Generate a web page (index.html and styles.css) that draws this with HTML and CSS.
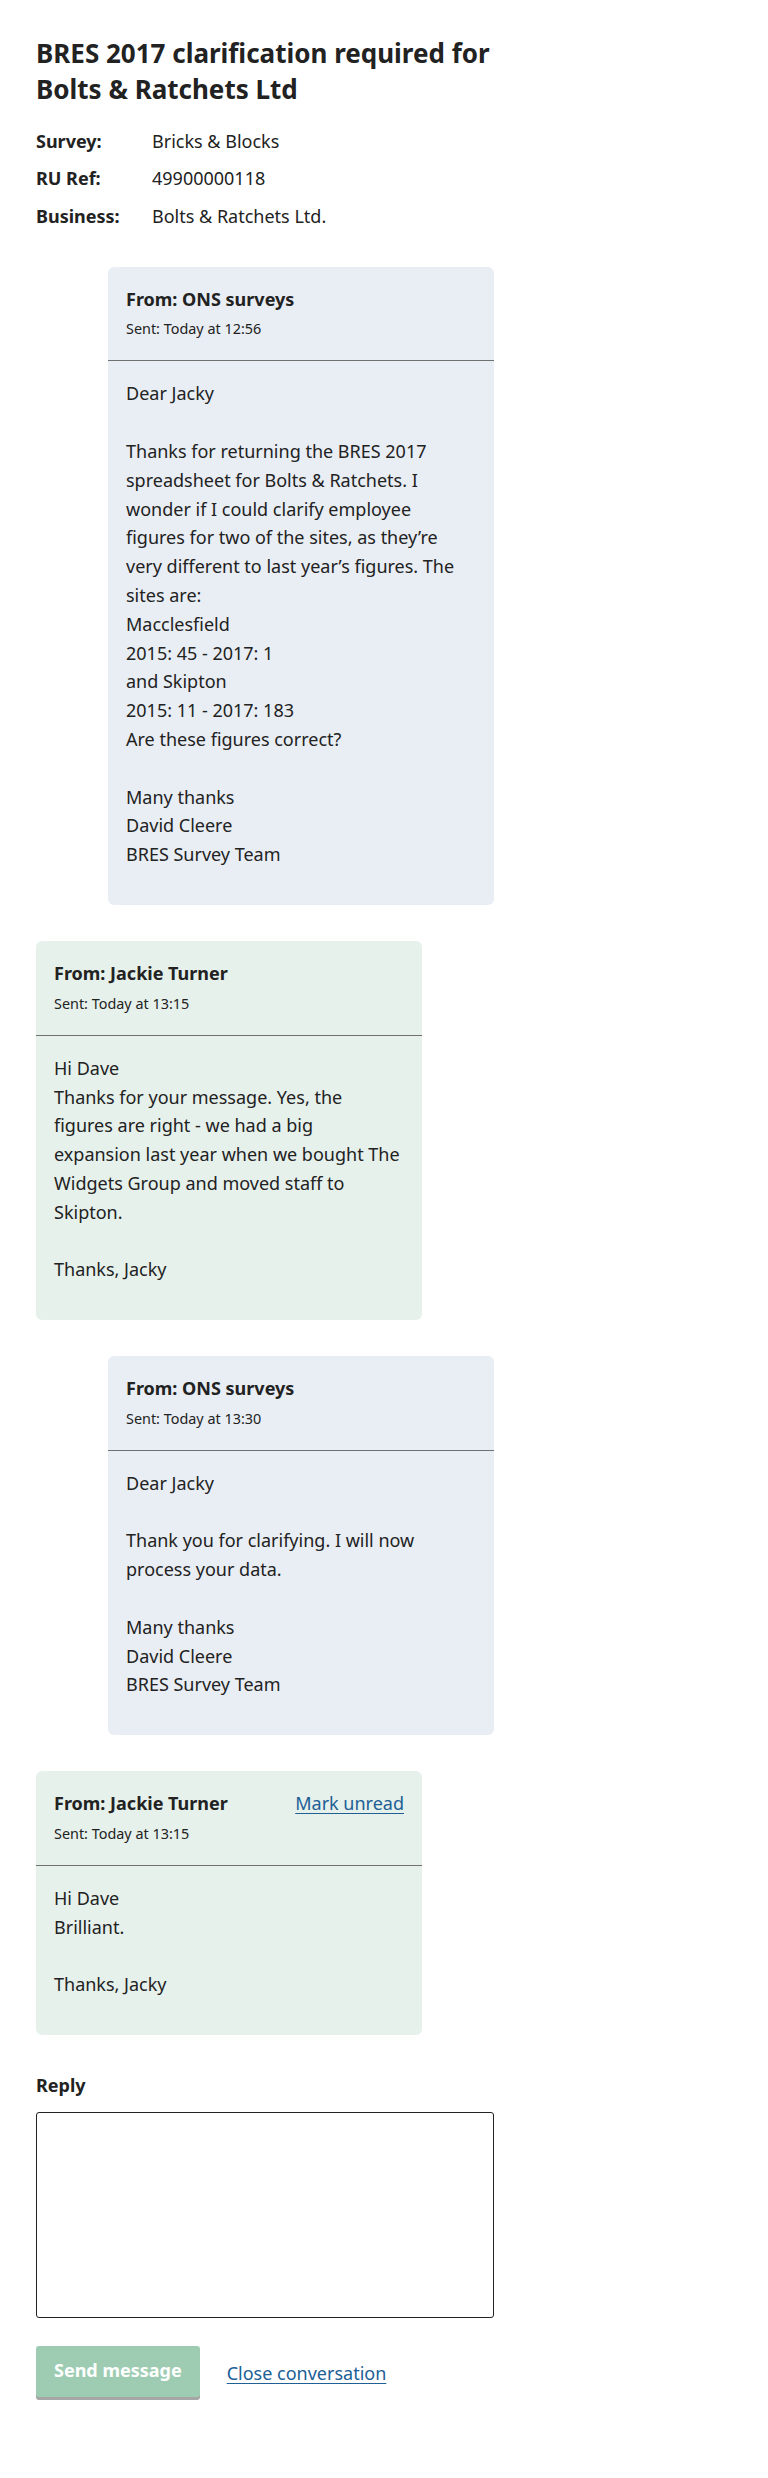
FILE: index.html
```html
<!DOCTYPE html>
<html lang="en">
<head>
<meta charset="utf-8">
<title>BRES 2017 clarification required for Bolts &amp; Ratchets Ltd</title>
<link rel="stylesheet" href="styles.css">
</head>
<body>
<main class="page">
  <h1 class="title">BRES 2017 clarification required for Bolts &amp; Ratchets Ltd</h1>
  <dl class="meta">
    <dt class="meta__term">Survey:</dt>
    <dd class="meta__value">Bricks &amp; Blocks</dd>
    <dt class="meta__term">RU Ref:</dt>
    <dd class="meta__value">49900000118</dd>
    <dt class="meta__term">Business:</dt>
    <dd class="meta__value">Bolts &amp; Ratchets Ltd.</dd>
  </dl>

  <div class="thread">
    <article class="msg msg--sent">
      <header class="msg__head">
        <div class="msg__row"><p class="msg__from">From: ONS surveys</p></div>
        <p class="msg__sent">Sent: Today at 12:56</p>
      </header>
      <div class="msg__body">
        <p>Dear Jacky<br><br>Thanks for returning the BRES 2017 spreadsheet for Bolts &amp; Ratchets. I wonder if I could clarify employee figures for two of the sites, as they’re very different to last year’s figures. The sites are:<br>Macclesfield<br>2015: 45 - 2017: 1<br>and Skipton<br>2015: 11 - 2017: 183<br>Are these figures correct?<br><br>Many thanks<br>David Cleere<br>BRES Survey Team</p>
      </div>
    </article>

    <article class="msg msg--received">
      <header class="msg__head">
        <div class="msg__row"><p class="msg__from">From: Jackie Turner</p></div>
        <p class="msg__sent">Sent: Today at 13:15</p>
      </header>
      <div class="msg__body">
        <p>Hi Dave<br>Thanks for your message. Yes, the figures are right - we had a big expansion last year when we bought The Widgets Group and moved staff to Skipton.<br><br>Thanks, Jacky</p>
      </div>
    </article>

    <article class="msg msg--sent">
      <header class="msg__head">
        <div class="msg__row"><p class="msg__from">From: ONS surveys</p></div>
        <p class="msg__sent">Sent: Today at 13:30</p>
      </header>
      <div class="msg__body">
        <p>Dear Jacky<br><br>Thank you for clarifying. I will now process your data.<br><br>Many thanks<br>David Cleere<br>BRES Survey Team</p>
      </div>
    </article>

    <article class="msg msg--received">
      <header class="msg__head">
        <div class="msg__row">
          <p class="msg__from">From: Jackie Turner</p>
          <a class="link" href="#">Mark unread</a>
        </div>
        <p class="msg__sent">Sent: Today at 13:15</p>
      </header>
      <div class="msg__body">
        <p>Hi Dave<br>Brilliant.<br><br>Thanks, Jacky</p>
      </div>
    </article>
  </div>

  <form class="reply" action="#">
    <label class="reply__label" for="reply">Reply</label>
    <textarea class="reply__input" id="reply" name="reply"></textarea>
    <div class="actions">
      <button class="btn" type="button" disabled>Send message</button>
      <a class="link" href="#">Close conversation</a>
    </div>
  </form>
</main>
</body>
</html>
```

FILE: styles.css
```css
* {
  box-sizing: border-box;
}

html, body {
  margin: 0;
  padding: 0;
  background: #ffffff;
}

body {
  font-family: "Noto Sans", "Open Sans", "Liberation Sans", sans-serif;
  font-size: 18px;
  line-height: 1.6;
  color: #222222;
}

.page {
  width: 458px;
  margin-left: 36px;
  padding-top: 35px;
}

.title {
  margin: 0 0 19px;
  font-size: 26px;
  line-height: 36.4px;
  font-weight: 700;
}

.meta {
  display: grid;
  grid-template-columns: 116px 1fr;
  row-gap: 8.7px;
  margin: 0 0 36px;
}

.meta__term {
  font-weight: 700;
  margin: 0;
}

.meta__value {
  margin: 0;
}

.thread {
  display: flex;
  flex-direction: column;
}

.msg {
  width: 386px;
  border-radius: 6px;
  margin-bottom: 36px;
}

.msg--sent {
  margin-left: 72px;
  background: #e9eef4;
}

.msg--received {
  background: #e7f1ec;
}

.msg__head {
  padding: 18px 18px 20px;
  border-bottom: 1px solid #707070;
}

.msg__row {
  display: flex;
  justify-content: space-between;
  align-items: baseline;
}

.msg__from {
  margin: 0;
  font-weight: 700;
}

.msg__sent {
  margin: 4px 0 0;
  font-size: 14.4px;
  line-height: 23px;
}

.msg__body {
  padding: 18px 21px 18px 18px;
}

.msg__body p {
  margin: 0 0 18px;
}

.link {
  color: #206095;
  text-decoration: underline;
  text-underline-offset: 3px;
}

.reply__label {
  display: block;
  font-weight: 700;
  margin-bottom: 12px;
}

.reply__input {
  display: block;
  width: 458px;
  height: 206px;
  border: 1px solid #222222;
  border-radius: 3px;
  resize: none;
  font: inherit;
  margin: 0 0 28px;
}

.actions {
  display: flex;
  align-items: center;
  gap: 27px;
}

.btn {
  font: inherit;
  font-weight: 700;
  color: #ffffff;
  background: #0f8243;
  border: 0;
  border-radius: 3px;
  padding: 10px 18px 12px;
  line-height: 28.8px;
  box-shadow: 0 3px 0 #222222;
  opacity: 0.4;
  margin-bottom: 3px;
}
```
